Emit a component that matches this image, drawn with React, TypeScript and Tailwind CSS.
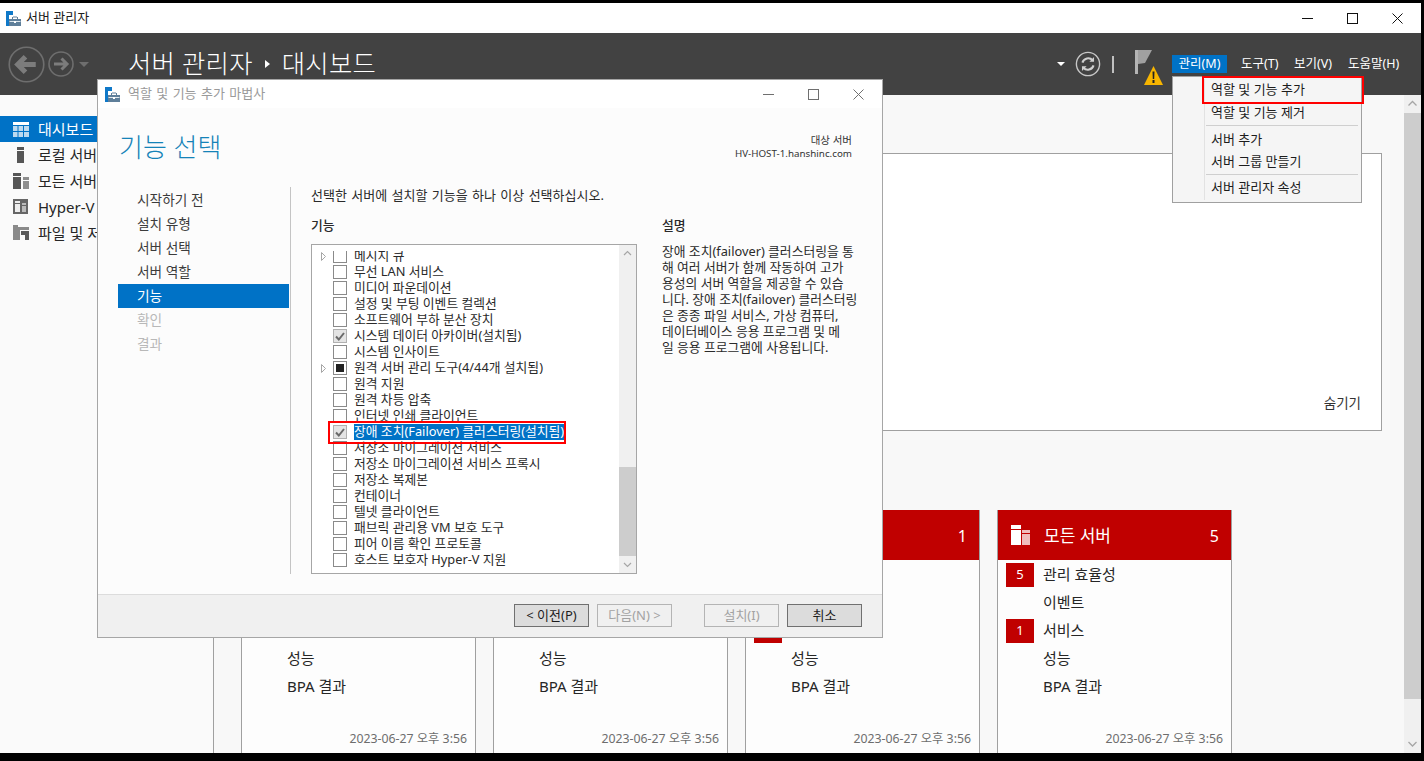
import { ReactNode } from 'react';

const features: { label: string; state?: 'checked' | 'partial'; arrow?: boolean; selected?: boolean }[] = [
  { label: '메시지 큐', arrow: true },
  { label: '무선 LAN 서비스' },
  { label: '미디어 파운데이션' },
  { label: '설정 및 부팅 이벤트 컬렉션' },
  { label: '소프트웨어 부하 분산 장치' },
  { label: '시스템 데이터 아카이버(설치됨)', state: 'checked' },
  { label: '시스템 인사이트' },
  { label: '원격 서버 관리 도구(4/44개 설치됨)', state: 'partial', arrow: true },
  { label: '원격 지원' },
  { label: '원격 차등 압축' },
  { label: '인터넷 인쇄 클라이언트' },
  { label: '장애 조치(Failover) 클러스터링(설치됨)', state: 'checked', selected: true },
  { label: '저장소 마이그레이션 서비스' },
  { label: '저장소 마이그레이션 서비스 프록시' },
  { label: '저장소 복제본' },
  { label: '컨테이너' },
  { label: '텔넷 클라이언트' },
  { label: '패브릭 관리용 VM 보호 도구' },
  { label: '피어 이름 확인 프로토콜' },
  { label: '호스트 보호자 Hyper-V 지원' },
];

const steps = ['시작하기 전', '설치 유형', '서버 선택', '서버 역할', '기능', '확인', '결과'];

const description = [
  '장애 조치(failover) 클러스터링을 통',
  '해 여러 서버가 함께 작동하여 고가',
  '용성의 서버 역할을 제공할 수 있습',
  '니다. 장애 조치(failover) 클러스터링',
  '은 종종 파일 서비스, 가상 컴퓨터,',
  '데이터베이스 응용 프로그램 및 메',
  '일 응용 프로그램에 사용됩니다.',
];

function AppLogo() {
  return (
    <svg width="15" height="15" viewBox="0 0 15 15" className="shrink-0">
      <rect x="0" y="0" width="7" height="4" fill="#0f78c8" />
      <rect x="0" y="4" width="3" height="11" fill="#0f78c8" />
      <rect x="3" y="8" width="12" height="7" fill="#5f7f9a" />
      <rect x="3.5" y="10" width="11" height="1" fill="#dfe8ee" />
      <rect x="7" y="5.5" width="4" height="1" fill="#5f7f9a" />
      <rect x="6" y="6" width="1" height="2" fill="#5f7f9a" />
      <rect x="11" y="6" width="1" height="2" fill="#5f7f9a" />
      <rect x="8" y="10" width="2" height="2" fill="#fff" />
    </svg>
  );
}

function WinControls({ color, gaps }: { color: string; gaps: string }) {
  return (
    <div className={`flex items-center ${gaps}`}>
      <svg width="11" height="11" viewBox="0 0 11 11"><path d="M0 5.5H11" stroke={color} /></svg>
      <svg width="11" height="11" viewBox="0 0 11 11"><rect x="0.5" y="0.5" width="10" height="10" fill="none" stroke={color} /></svg>
      <svg width="11" height="11" viewBox="0 0 11 11"><path d="M0.5 0.5L10.5 10.5M10.5 0.5L0.5 10.5" stroke={color} /></svg>
    </div>
  );
}

function NavCircle({ size, sw }: { size: number; sw: number }) {
  return (
    <svg width={size} height={size} viewBox="0 0 36 36" className="shrink-0">
      <circle cx="18" cy="18" r="16.8" fill="none" stroke="#6e6e6e" strokeWidth={sw} />
      <path d="M27 18H10M17 10.5L9.5 18L17 25.5" fill="none" stroke="#7c7c7c" strokeWidth="5" />
    </svg>
  );
}

function NavCircleRight() {
  return (
    <svg width="26" height="26" viewBox="0 0 26 26" className="shrink-0">
      <circle cx="13" cy="13" r="12" fill="none" stroke="#6e6e6e" strokeWidth="1.6" />
      <path d="M6 13H19M13.5 7.5L19 13L13.5 18.5" fill="none" stroke="#7c7c7c" strokeWidth="3" />
    </svg>
  );
}

function SideIcon({ kind }: { kind: string }) {
  if (kind === 'dash') {
    return (
      <svg width="16" height="15" viewBox="0 0 16 15">
        <rect width="16" height="3" fill="#fff" />
        <rect y="4" width="16" height="11" fill="#bcd9ef" />
        <path d="M5 4V15M10.500 4V15M0 9.500H16" stroke="#0072c6" />
      </svg>
    );
  }
  if (kind === 'local') {
    return (
      <svg width="16" height="16" viewBox="0 0 16 16">
        <rect x="4" y="0" width="7" height="3" fill="#565656" />
        <rect x="4" y="4" width="7" height="12" fill="#565656" />
      </svg>
    );
  }
  if (kind === 'all') {
    return (
      <svg width="16" height="16" viewBox="0 0 16 16">
        <rect x="0" y="0" width="8" height="3" fill="#565656" />
        <rect x="0" y="4" width="8" height="12" fill="#565656" />
        <rect x="10" y="4" width="6" height="3" fill="#8e8e8e" />
        <rect x="10" y="8" width="6" height="8" fill="#8e8e8e" />
      </svg>
    );
  }
  if (kind === 'hyper') {
    return (
      <svg width="16" height="16" viewBox="0 0 16 16">
        <rect x="0" y="0" width="15" height="15" fill="#666" />
        <rect x="2" y="2" width="5" height="2" fill="#eee" />
        <rect x="2" y="5" width="5" height="8" fill="#eee" />
        <rect x="9" y="4" width="4" height="2" fill="#bbb" />
        <rect x="9" y="7" width="4" height="6" fill="#bbb" />
      </svg>
    );
  }
  return (
    <svg width="16" height="16" viewBox="0 0 16 16">
      <path d="M0 0H5V2H16V5H7V15H0Z" fill="#8a8a8a" />
      <path d="M8 6H16V15H12V10H8Z" fill="#5a5a5a" />
    </svg>
  );
}

function SideItem({ kind, label, active }: { kind: string; label: string; active?: boolean }) {
  return (
    <div className={`flex h-[26px] items-center overflow-hidden pl-[13px] text-[15px] whitespace-nowrap ${active ? 'bg-[#0072c6] text-white' : 'text-[#262626]'}`}>
      <span className="flex w-[25px] shrink-0"><SideIcon kind={kind} /></span>
      {label}
    </div>
  );
}

function MenuEntry({ children, className = '' }: { children: ReactNode; className?: string }) {
  return <div className={`flex h-[22px] items-center pl-[38px] text-[13px] text-[#1c1c1c] ${className}`}>{children}</div>;
}

function Sep({ className = '' }: { className?: string }) {
  return <div className={`ml-[33px] mr-[3px] h-px bg-[#cfcfcf] ${className}`} />;
}

function Tile({ title, count, first, third }: { title?: string; count: number; first?: number; third?: number }) {
  const rows: [string, number | undefined][] = [
    ['관리 효율성', first],
    ['이벤트', undefined],
    ['서비스', third],
    ['성능', undefined],
    ['BPA 결과', undefined],
  ];
  return (
    <div className="flex h-[260px] w-[235px] shrink-0 flex-col border border-t-0 border-[#a0a0a0] bg-[#fdfdfd]">
      <div className="flex h-[50px] shrink-0 items-center bg-[#c00000] pl-[13px] pr-[12px] text-white">
        <svg width="20" height="20" viewBox="0 0 20 20" className="mr-[13px] shrink-0">
          <rect x="0" y="0" width="10" height="4" fill="#fff" />
          <rect x="0" y="5" width="10" height="15" fill="#fff" />
          <rect x="11" y="5" width="8" height="3" fill="#efbcbc" />
          <rect x="11" y="9" width="8" height="11" fill="#efbcbc" />
        </svg>
        <span className="flex-1 pt-[1px] text-[17px]">{title}</span>
        <span className="pt-[1px] text-[16px]">{count}</span>
      </div>
      <div className="flex flex-col pt-[1px]">
        {rows.map(([label, badge]) => (
          <div key={label} className="flex h-[28px] items-center pl-[8px] text-[15px] text-[#262626]">
            <span className={`mr-[9px] flex h-[24px] w-[28px] items-center justify-center text-[13px] text-white ${badge ? 'bg-[#c00000]' : ''}`}>{badge}</span>
            <span className="pb-[2px]">{label}</span>
          </div>
        ))}
      </div>
      <div className="mt-[29px] pr-[8px] text-right text-[12.300px] text-[#6d6d6d]">2023-06-27 오후 3:56</div>
    </div>
  );
}

function Check({ state }: { state?: 'checked' | 'partial' }) {
  if (state === 'checked') {
    return (
      <span className="flex h-[14px] w-[14px] shrink-0 items-center justify-center border border-[#b0b0b0] bg-[#e4e4e4]">
        <svg width="10" height="9" viewBox="0 0 10 9"><path d="M1 4.500L3.800 7.500L9 1" fill="none" stroke="#6a6a6a" strokeWidth="2" /></svg>
      </span>
    );
  }
  return (
    <span className="flex h-[14px] w-[14px] shrink-0 items-center justify-center border border-[#8a8a8a] bg-white">
      {state === 'partial' && <span className="h-[8px] w-[8px] bg-[#222]" />}
    </span>
  );
}

function FeatureRow({ label, state, arrow, selected, clip }: { label: string; state?: 'checked' | 'partial'; arrow?: boolean; selected?: boolean; clip?: boolean }) {
  return (
    <div className={`flex h-[16px] shrink-0 items-center whitespace-nowrap pl-[9px] text-[12.800px] ${clip ? '-mt-[3px]' : ''}`}>
      <span className="flex w-[12px] shrink-0">
        {arrow && (
          <svg width="5" height="9" viewBox="0 0 5 9"><path d="M0.500 0.500L4.500 4.500L0.500 8.500Z" fill="#fff" stroke="#a6a6a6" /></svg>
        )}
      </span>
      <Check state={state} />
      <span className={`ml-[7px] flex h-[16px] items-center ${selected ? 'bg-[#0072c6] text-white' : 'text-[#2a2a2a]'}`}>{label}</span>
    </div>
  );
}

function WizardButton({ children, on }: { children: ReactNode; on?: boolean }) {
  return (
    <div className={`flex h-[23px] w-[75px] items-center justify-center border text-[13px] ${on ? 'border-[#707070] bg-[#dcdcdc] text-[#1c1c1c]' : 'border-[#b4b4b4] bg-[#f0f0f0] text-[#a2a2a2]'}`}>
      {children}
    </div>
  );
}

function Wizard() {
  return (
    <div className="absolute left-[97px] top-[79px] flex h-[559px] w-[786px] flex-col border border-[#a6a6a6] bg-[#fcfcfc]">
      <div className="flex h-[28px] shrink-0 items-center bg-white pl-[7px] pr-[18px]">
        <AppLogo />
        <span className="ml-[8px] flex-1 text-[13px] [word-spacing:1px] text-[#9a9a9a]">역할 및 기능 추가 마법사</span>
        <WinControls color="#6f6f6f" gaps="gap-[34px]" />
      </div>
      <div className="flex h-[79px] shrink-0 pl-[21px] pr-[30px]">
        <div className="flex-1 pt-[20px] text-[26px] leading-[38px] font-light text-[#1583b8]">기능 선택</div>
        <div className="pt-[25px] text-right leading-[14px] text-[#333]">
          <div className="text-[10.500px]">대상 서버</div>
          <div className="text-[9.800px]">HV-HOST-1.hanshinc.com</div>
        </div>
      </div>
      <div className="flex h-[387px] shrink-0">
        <div className="ml-[20px] mr-[1px] w-[171px] shrink-0 pt-[1px]">
          {steps.map((s, i) => (
            <div
              key={s}
              className={`flex h-[24px] items-center pl-[19px] pt-[1px] text-[13.700px] ${i === 4 ? 'bg-[#0072c6] text-white' : i > 4 ? 'text-[#b8b8b8]' : 'text-[#3c3c3c]'}`}
            >
              {s}
            </div>
          ))}
        </div>
        <div className="flex flex-1 flex-col border-l border-[#c4c4c4] pl-[20px]">
          <div className="h-[16px] text-[13px] leading-[16px] [word-spacing:1px] whitespace-nowrap text-[#2a2a2a]">선택한 서버에 설치할 기능을 하나 이상 선택하십시오.</div>
          <div className="mt-[15px] flex flex-1">
            <div className="flex w-[326px] shrink-0 flex-col">
              <div className="h-[26px] text-[12.800px] leading-[14px] font-medium text-[#2a2a2a]">기능</div>
              <div className="relative flex h-[330px] border border-[#a6a6a6] bg-white">
                <div className="mt-[6px] flex h-[321px] flex-1 flex-col overflow-hidden">
                  {features.map((f, i) => (
                    <FeatureRow key={f.label} {...f} clip={i === 0} />
                  ))}
                </div>
                <div className="flex w-[17px] shrink-0 flex-col bg-[#f0f0f0]">
                  <svg width="17" height="17" viewBox="0 0 17 17"><path d="M5 10L8.500 6.500L12 10" fill="none" stroke="#a6a6a6" strokeWidth="1.200" /></svg>
                  <div className="mt-[205px] h-[89px] bg-[#cdcdcd]" />
                  <svg width="17" height="17" viewBox="0 0 17 17"><path d="M5 7L8.500 10.500L12 7" fill="none" stroke="#a6a6a6" strokeWidth="1.200" /></svg>
                </div>
                <div className="absolute left-[16px] top-[176px] h-[23px] w-[238px] border-2 border-[#ff0000]" />
              </div>
            </div>
            <div className="ml-[25px] w-[205px] shrink-0 text-[12.800px] text-[#2a2a2a]">
              <div className="h-[25px] leading-[14px] font-medium">설명</div>
              {description.map(d => (
                <div key={d} className="h-[16px] whitespace-nowrap leading-[16px]">{d}</div>
              ))}
            </div>
          </div>
        </div>
      </div>
      <div className="flex-1" />
      <div className="flex h-[43px] shrink-0 items-center border-t border-[#dcdcdc] bg-[#f0f0f0] pb-[1px] pl-[416px]">
        <WizardButton on>&lt; 이전(P)</WizardButton>
        <div className="ml-[8px]"><WizardButton>다음(N) &gt;</WizardButton></div>
        <div className="ml-[32px]"><WizardButton>설치(I)</WizardButton></div>
        <div className="ml-[8px]"><WizardButton on>취소</WizardButton></div>
      </div>
    </div>
  );
}

function ManageMenu() {
  return (
    <div className="absolute left-[1172px] top-[76px] h-[127px] w-[190px] border border-[#a0a0a0] bg-[#f5f5f5] pt-[2px]">
      <div className="absolute bottom-[2px] left-[31px] top-[2px] w-px bg-[#e2e2e2]" />
      <MenuEntry>역할 및 기능 추가</MenuEntry>
      <MenuEntry className="pt-[2px]">역할 및 기능 제거</MenuEntry>
      <Sep className="mt-[2px]" />
      <div className="mt-[3px]">
        <MenuEntry>서버 추가</MenuEntry>
        <MenuEntry>서버 그룹 만들기</MenuEntry>
      </div>
      <Sep className="mt-[1px]" />
      <div className="mt-[2px]">
        <MenuEntry>서버 관리자 속성</MenuEntry>
      </div>
      <div className="absolute left-[29px] top-[-1px] h-[28px] w-[162px] border-2 border-[#ff0000]" />
    </div>
  );
}

export default function App() {
  return (
    <div className="relative flex h-[761px] w-[1424px] flex-col overflow-hidden bg-black pb-[8px] pr-[3px] pt-[3px] font-['Noto_Sans','Noto_Sans_CJK_KR',sans-serif]">
      <div className="flex h-[30px] shrink-0 items-center bg-white pl-[6px] pr-[18px]">
        <AppLogo />
        <span className="ml-[5px] flex-1 text-[13px] text-[#1c1c1c]">서버 관리자</span>
        <WinControls color="#111" gaps="gap-[34px]" />
      </div>

      <div className="flex h-[62px] shrink-0 items-center bg-[#424242] pl-[8px] text-white">
        <NavCircle size={37} sw={1.600} />
        <span className="ml-[3px]"><NavCircleRight /></span>
        <span className="ml-[5px] h-0 w-0 border-x-[5px] border-t-[5px] border-x-transparent border-t-[#6e6e6e]" />
        <div className="ml-[39px] flex flex-1 items-center text-[25.300px] font-light tracking-[0.3px]">
          서버 관리자
          <span className="mx-[12px] h-0 w-0 border-y-[4px] border-l-[5px] border-y-transparent border-l-white" />
          대시보드
        </div>
        <span className="h-0 w-0 border-x-[4px] border-t-[4px] border-x-transparent border-t-white" />
        <svg width="26" height="26" viewBox="0 0 28 28" className="ml-[10px]">
          <circle cx="14" cy="14" r="12.500" fill="none" stroke="#c8c8c8" strokeWidth="1.500" />
          <path d="M8 12.500A6.500 6.500 0 0 1 19 10M20 15.500A6.500 6.500 0 0 1 9 18" fill="none" stroke="#d0d0d0" strokeWidth="2.200" />
          <path d="M20.500 6.500V11.500H15.500ZM7.500 21.500V16.500H12.500Z" fill="#d0d0d0" />
        </svg>
        <span className="ml-[11px] h-[17px] w-[2px] bg-[#c0c0c0]" />
        <svg width="28" height="35" viewBox="0 0 28 35" className="ml-[21px] mt-[7px]">
          <rect x="0" y="0" width="3" height="24" fill="#b4b4b4" />
          <path d="M3 0H17L10 13L3 14Z" fill="#a0a0a0" />
          <path d="M18.500 16L28 35H9Z" fill="#f7b500" />
          <path d="M17.500 21.500H19.500L19.200 29H17.800ZM17.500 30H19.500V33H17.500Z" fill="#222" />
        </svg>
        <div className="ml-[9px] flex items-center pr-[21px] text-[12.500px]">
          <span className="flex h-[18px] w-[55px] items-center justify-center bg-[#0072c6]">관리(M)</span>
          <span className="ml-[14px] w-[38px] whitespace-nowrap">도구(T)</span>
          <span className="ml-[15px] w-[39px] whitespace-nowrap">보기(V)</span>
          <span className="ml-[15px] w-[52px] whitespace-nowrap">도움말(H)</span>
        </div>
      </div>

      <div className="flex min-h-0 flex-1">
        <div className="w-[214px] shrink-0 border-r border-[#a0a0a0] bg-[#fafafa] pt-[21px]">
          <SideItem kind="dash" label="대시보드" active />
          <SideItem kind="local" label="로컬 서버" />
          <SideItem kind="all" label="모든 서버" />
          <SideItem kind="hyper" label="Hyper-V" />
          <SideItem kind="file" label="파일 및 저장소 서비스" />
        </div>
        <div className="flex-1 overflow-hidden bg-[#f8f8f8] pl-[27px] pt-[58px]">
          <div className="flex h-[278px] w-[1141px] items-end justify-end border border-[#a0a0a0] bg-white pb-[17px] pr-[20px] text-[13.500px] text-[#333]">
            숨기기
          </div>
          <div className="mt-[79px] flex gap-[17px]">
            <Tile title="로컬 서버" count={1} />
            <Tile title="파일 및 저장소 서비스" count={1} />
            <Tile title="Hyper-V" count={1} third={1} />
            <Tile title="모든 서버" count={5} first={5} third={1} />
          </div>
        </div>
        <div className="flex w-[17px] shrink-0 flex-col bg-[#f0f0f0]">
          <svg width="17" height="18" viewBox="0 0 17 18"><path d="M4.500 10.500L8.500 6.500L12.500 10.500" fill="none" stroke="#a6a6a6" strokeWidth="1.300" /></svg>
          <div className="h-[586px] bg-[#cdcdcd]" />
          <div className="flex-1" />
          <svg width="17" height="17" viewBox="0 0 17 17"><path d="M4.500 6L8.500 10L12.500 6" fill="none" stroke="#a6a6a6" strokeWidth="1.300" /></svg>
        </div>
      </div>

      <Wizard />
      <ManageMenu />
    </div>
  );
}
